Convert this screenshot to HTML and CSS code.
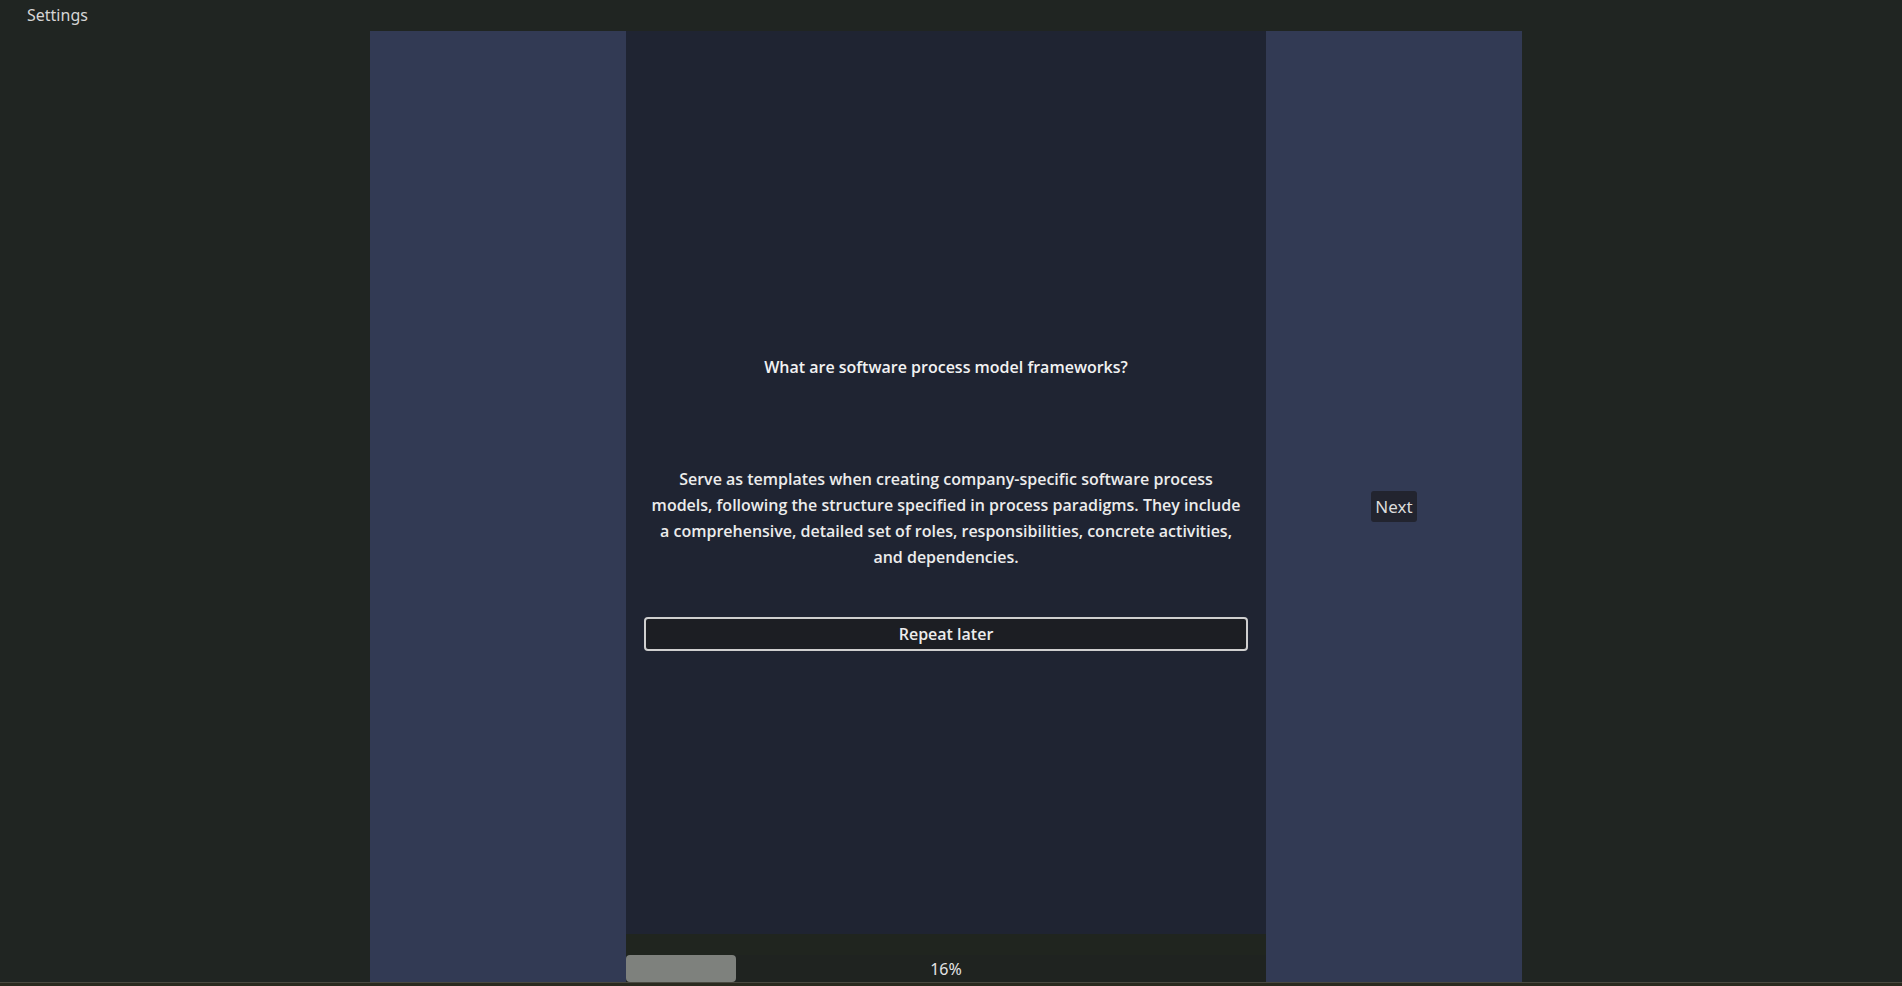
FILE: index.html
```html
<!DOCTYPE html>
<html lang="en">
<head>
<meta charset="utf-8">
<title>Flashcards</title>
<link rel="stylesheet" href="styles.css">
</head>
<body>
<div class="app">
  <header class="topbar">
    <span class="settings">Settings</span>
  </header>
  <main class="stage">
    <aside class="side side-left"></aside>
    <section class="card">
      <div class="card-body">
        <h1 class="question">What are software process model frameworks?</h1>
        <p class="answer">Serve as templates when creating company-specific software process models, following the structure specified in process paradigms. They include a comprehensive, detailed set of roles, responsibilities, concrete activities, and dependencies.</p>
        <button class="repeat">Repeat later</button>
      </div>
      <div class="card-footer">
        <div class="band"></div>
        <div class="progress-row">
          <div class="progress-bar" style="width:110px"></div>
          <span class="progress-label">16%</span>
        </div>
      </div>
    </section>
    <aside class="side side-right">
      <button class="next">Next</button>
    </aside>
  </main>
  <footer class="bottom-strip"></footer>
</div>
</body>
</html>
```
FILE: styles.css
```css
* { box-sizing: border-box; }
html, body {
  margin: 0;
  padding: 0;
  height: 100%;
  overflow: hidden;
}
body {
  background: #202522;
  font-family: "Noto Sans", "Open Sans", sans-serif;
  color: #e6e6e6;
}
.app {
  display: flex;
  flex-direction: column;
  height: 986px;
}
.topbar {
  height: 31px;
  padding-left: 27px;
  display: flex;
  align-items: flex-start;
}
.settings {
  font-size: 16px;
  line-height: 30px;
  color: #d6d6d6;
}
.stage {
  display: flex;
  height: 951px;
  padding-left: 370px;
}
.side {
  width: 256px;
  background: #323a54;
}
.side-right {
  display: flex;
  align-items: center;
  justify-content: center;
}
.card {
  width: 640px;
  background: #1f2432;
  display: flex;
  flex-direction: column;
}
.card-body {
  flex: 1;
  display: flex;
  flex-direction: column;
  align-items: center;
  padding: 325px 18px 0;
}
.question {
  margin: 0;
  font-family: "Open Sans", "Noto Sans", sans-serif;
  font-size: 16px;
  font-weight: 600;
  line-height: 22px;
  color: #f2f2f2;
  text-align: center;
}
.answer {
  margin: 88px 0 0;
  font-family: "Open Sans", "Noto Sans", sans-serif;
  font-size: 16px;
  font-weight: 600;
  line-height: 26px;
  color: #ececec;
  text-align: center;
  width: 594px;
}
.repeat {
  margin-top: 47px;
  width: 100%;
  height: 34px;
  background: #1c1e23;
  border: 2px solid #cfcfcf;
  border-radius: 4px;
  color: #ececec;
  font-family: "Open Sans", "Noto Sans", sans-serif;
  font-size: 16px;
  font-weight: 600;
  padding: 0;
}
.card-footer {
  height: 48px;
  display: flex;
  flex-direction: column;
}
.band {
  height: 21px;
  background: #20251f;
}
.progress-row {
  flex: 1;
  position: relative;
  background: #1f2320;
  display: flex;
  align-items: center;
  justify-content: center;
}
.progress-bar {
  position: absolute;
  left: 0;
  top: 0;
  bottom: 0;
  background: #7e817d;
  border-radius: 4px;
}
.progress-label {
  font-size: 16px;
  color: #e4e4e4;
  line-height: 20px;
}
.next {
  height: 31px;
  padding: 0 4px;
  background: #22242f;
  border: none;
  border-radius: 3px;
  color: #dcdcdc;
  font-family: "Noto Sans", "Open Sans", sans-serif;
  font-size: 17px;
}
.bottom-strip {
  height: 4px;
  border-top: 1px solid #4a4940;
  background: #2a2a1f;
}
```
